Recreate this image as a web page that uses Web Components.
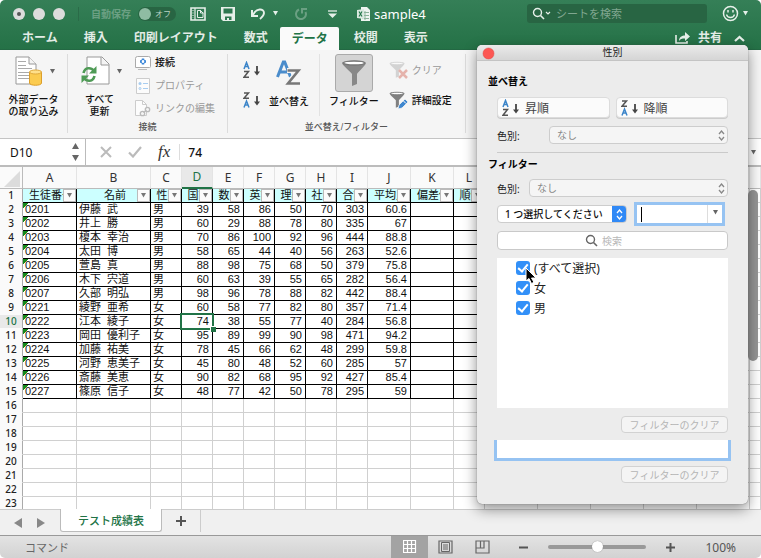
<!DOCTYPE html>
<html lang="ja">
<head>
<meta charset="utf-8">
<title>sample4</title>
<style>
html,body{height:100%}
body{margin:0;background:#fff;font-family:"Noto Sans","Noto Sans CJK JP",sans-serif;font-size:10px;color:#222;overflow:hidden}
</style>
</head>
<body>
<excel-window></excel-window>
<script>
const base = `*{box-sizing:border-box}
button,input,select{font:inherit;color:inherit;margin:0;padding:0;border:0;background:none;border-radius:0;outline:0}
button{display:flex;align-items:center;justify-content:center}`;

function define(name, css, html, init) {
  const t = document.createElement('template');
  t.innerHTML = `<style>${base}${css}</style>${typeof html === 'function' ? html() : html}`;
  customElements.define(name, class extends HTMLElement {
    constructor() {
      super();
      this.attachShadow({ mode: 'open' }).append(t.content.cloneNode(true));
    }
    connectedCallback() { if (init) init(this, this.shadowRoot); }
  });
}

const funnel = (a, b) => `<path d="M1 4C1 1 25 1 25 4C25 6 17 13 16 15V25L11 27V15C10 13 1 6 1 4Z" fill="${a}"/><ellipse cx="13" cy="4" rx="10.500" ry="2" fill="#fff" stroke="${b}" stroke-width="1.3"/>`;
const az = (t, b, ct, cb) => `<g fill="none" stroke-width="1.500"><g stroke="${ct}"><path d="${t}"/></g><g stroke="${cb}"><path d="${b}"/></g></g><path d="M14 5v7" stroke="#444" stroke-width="1.800"/><path d="M11 10.500h6L14 14.500z" fill="#444"/>`;
const icons = {
  close: [14, 14, `<circle cx="7" cy="7" r="6" fill="#dcdcdc"/>`],
  closeDot: [14, 14, `<circle cx="7" cy="7" r="6" fill="#dcdcdc"/><circle cx="7" cy="7" r="2" fill="#555"/>`],
  layout: [16, 14, `<path d="M1 1h14v12H1z" fill="none" stroke="#e6efe9" stroke-width="1.600"/><path d="M5 1v12" stroke="#e6efe9" stroke-width="1.200"/><path d="M3 3v8" stroke="#e6efe9" stroke-dasharray="1 1.500"/><path d="M7.500 3.500h3l2.500 2.500v4.500H7.500z" fill="#2c774f" stroke="#e6efe9"/><path d="M10.500 3v3h3" fill="none" stroke="#e6efe9"/>`],
  save: [14, 14, `<path d="M0 0h14v14H2L0 12z" fill="#e6efe9"/><path d="M2.500 1.500h9v5h-9zM4 9.500h6.500V13H8v-2H6v2H4z" fill="#2c774f"/>`],
  undo: [16, 13, `<path d="M3 8C6 1 14 1 14 6c0 2.500-2 4-4 6" fill="none" stroke="#e6efe9" stroke-width="1.900"/><path d="M2 3v6h6" fill="none" stroke="#e6efe9" stroke-width="2"/>`],
  redo: [14, 14, `<path d="M5 2.500A5 5 0 1 0 11.500 5" fill="none" stroke="#6ba083" stroke-width="2"/><path d="M8 6.500V2h5" fill="none" stroke="#6ba083" stroke-width="2"/>`],
  custom: [9, 8, `<path d="M0 1h9" stroke="#e6efe9" stroke-width="1.300"/><path d="M0 3.500h9L4.500 8z" fill="#e6efe9"/>`],
  book: [13, 14, `<path d="M4 0h6l3 3v11H4z" fill="#eef4f0"/><path d="M8 4v9M5 5.500h7M5 8.500h7M5 11.500h7" stroke="#8bb49a"/><path d="M0 3l7-1v10l-7-1z" fill="#dbe9e0"/><path d="M2 4.500l3 5M5 4.500l-3 5" stroke="#24764a" stroke-width="1.200"/>`],
  caret: [7, 5, `<path d="M1 0h5L3.500 4.500z" fill="currentColor"/>`],
  search: [13, 13, `<circle cx="5.500" cy="5.500" r="4" fill="none" stroke="currentColor" stroke-width="1.400"/><path d="M8.500 8.500L12 12" stroke="currentColor" stroke-width="1.600"/>`],
  chev: [6, 5, `<path d="M1 1l2 2 2-2" fill="none" stroke="#e6efe9" stroke-width="1.200"/>`],
  smile: [17, 17, `<circle cx="8.500" cy="8.500" r="7" fill="none" stroke="#e6efe9" stroke-width="1.500"/><path d="M6 5v2.500M11 5v2.500" stroke="#e6efe9" stroke-width="1.500"/><path d="M4.500 9.500c1 4 7 4 8 0" fill="none" stroke="#e6efe9" stroke-width="1.300"/>`],
  share: [16, 12, `<path d="M1 3v8h11V9" fill="none" stroke="#e6efe9" stroke-width="1.600"/><path d="M4 9c0-4 3-5.500 6-5.500V0l5 4.500L10 9V6.500C7 6.500 5 7 4 9z" fill="#e6efe9"/>`],
  up: [11, 7, `<path d="M1 6l4.500-4L10 6" fill="none" stroke="#e6efe9" stroke-width="2.200"/>`],
  data: [28, 30, `<path d="M1 1h13l7 7v20H1z" fill="#fff" stroke="#999"/><path d="M14 1v7h7" fill="#f4f4f4" stroke="#999"/><path d="M3 5.500h8M3 9.500h8M3 12.500h14M3 16.500h14M3 19.500h11M3 22.500h11" stroke="#aaa"/><path d="M14.500 16v11c0 3 12 3 12 0V16z" fill="#fbcb4f" stroke="#dc9f2b"/><ellipse cx="20.500" cy="16" rx="6" ry="2" fill="#ffe08a" stroke="#e0a93a"/>`],
  refresh: [29, 30, `<path d="M6 1h15l7 7v20H6z" fill="#fff" stroke="#999"/><path d="M20 1v8h8" fill="#f4f4f4" stroke="#999"/><g fill="none" stroke="#4f9b56" stroke-width="2.600"><path d="M2.500 17C4 11 10 11 13 15"/><path d="M13.500 20C12 26 6 26 3 22"/></g><path d="M15.500 10v7.500H8zM.500 27v-7.500H8z" fill="#4f9b56"/>`],
  conn: [16, 14, `<path d="M.500 2.500q0-2 2-2h11q2 0 2 2v8q0 1-1 1h-14z" fill="#fff" stroke="#aaa"/><path d="M3 13.500h9" stroke="#bbb"/><path d="M8 2.500v1.600M8 6.900v1.600M5 5.500h1.600M9.400 5.500H11" stroke="#3a86d8" stroke-width="2.400"/><circle cx="8" cy="5.500" r="2" fill="none" stroke="#3a86d8"/>`],
  prop: [16, 16, `<path d="M1.500.500h13v15h-13z" fill="#fcfcfc" stroke="#ccc"/><circle cx="5" cy="5.500" r="1.500" fill="#a8cdf0"/><circle cx="5" cy="10.500" r="1" fill="none" stroke="#a8cdf0"/><path d="M8 5.500h5M8 10.500h5" stroke="#a8cdf0"/>`],
  link: [17, 17, `<path d="M1.500.500h7l4 4v11h-11z" fill="#fcfcfc" stroke="#ccc"/><path d="M8.500.500v4h4" fill="none" stroke="#ccc"/><g fill="#f4f4f4" stroke="#bbb" stroke-width="1.300"><circle cx="8.500" cy="13.500" r="2.200"/><circle cx="13.500" cy="9.500" r="2.200"/></g><path d="M9.500 12.500l3-2.300" stroke="#bbb" stroke-width="1.300"/>`],
  asc: [18, 18, az('M1 8L3.500 1.500L6 8M2 5.500h3', 'M1 10.500h4.500L1 16.300h5', '#3c85c9', '#555')],
  desc: [18, 18, az('M1 2h4.500L1 7.300h5', 'M1 16.500L3.500 10L6 16.500M2 14h3', '#555', '#3c85c9')],
  sort: [26, 26, `<path d="M1.500 17L7.300 2h1.400l5.800 15M4 12h8" fill="none" stroke="#4a8ccb" stroke-width="3"/><path d="M11 10.500h12L11.500 23.500H24" fill="none" stroke="#f4f4f4" stroke-width="5"/><path d="M11.500 10.500h11L12 23.500h12" fill="none" stroke="#777" stroke-width="2.600"/>`],
  filter: [26, 28, funnel('#888', '#777')],
  clear: [20, 19, `<g transform="scale(.62)" opacity=".45">${funnel('#aaa', '#aaa')}</g><path d="M10 9l8 8M18 9l-8 8" stroke="#e5b3ac" stroke-width="2.500"/>`],
  adv: [20, 19, `<g transform="scale(.62)">${funnel('#808080', '#777')}</g><path d="M9 18l1-4 6-6 3 3-6 6z" fill="#3f87cf" stroke="#f4f4f4" stroke-width=".8"/><path d="M14 9.500l3 3" stroke="#fff"/>`],
  steps: [9, 18, `<path d="M1 6L4.500 0L8 6zM1 12l3.500 6L8 12z" fill="#666"/>`],
  x: [12, 12, `<path d="M1 1l10 10M11 1L1 11" stroke="#bbb" stroke-width="2"/>`],
  ok: [14, 12, `<path d="M1 6.500l4 4L13 1" fill="none" stroke="#bbb" stroke-width="2.200"/>`],
  corner: [16, 16, `<path d="M16 0v16H0z" fill="#dcdcdc"/>`],
  prev: [8, 10, `<path d="M8 0v10L0 5z" fill="#888"/>`],
  next: [8, 10, `<path d="M0 0v10l8-5z" fill="#888"/>`],
  plus: [10, 10, `<path d="M5 0v10M0 5h10" stroke="#555" stroke-width="2"/>`],
  plusS: [9, 9, `<path d="M4.500 0v9M0 4.500h9" stroke="#555" stroke-width="2"/>`],
  minus: [9, 9, `<path d="M0 4.500h9" stroke="#555" stroke-width="2"/>`],
  grid: [14, 14, `<path d="M.500.500h12v12H.500zM4.500.500v12M8.500.500v12M.500 4.500h12M.500 8.500h12" fill="none" stroke="#fff" stroke-width="1.200"/>`],
  page: [16, 14, `<path d="M1 1h13v12H1z" fill="none" stroke="#666" stroke-width="1.200"/><path d="M3.500 2.500h8v9h-8zM5 5h5M5 7h5M5 9h5" fill="none" stroke="#666"/>`],
  breaks: [15, 14, `<path d="M1 1h13v12H1zM1 8h8V1M5.500 1v7" fill="none" stroke="#666" stroke-width="1.200"/>`],
  red: [13, 13, `<circle cx="6.500" cy="6.500" r="5.500" fill="#fc5753" stroke="#df4744" stroke-width=".5"/>`],
  updown: [7, 11, `<path d="M1 4l2.500-3L6 4M1 7l2.500 3L6 7" fill="none" stroke="currentColor" stroke-width="1.300"/>`],
  cursor: [12, 18, `<path d="M1 1v13l3-2.500 2.500 5 2.500-1.200L6.500 11H11z" fill="#000" stroke="#fff"/>`]
};
customElements.define('xl-icon', class extends HTMLElement {
  connectedCallback() {
    if (this.shadowRoot) return;
    const [w, h, body] = icons[this.getAttribute('name')];
    this.attachShadow({ mode: 'open' }).innerHTML =
      `<style>:host{display:inline-flex;flex:none}svg{display:block}</style><svg width="${w}" height="${h}" viewBox="0 0 ${w} ${h}" aria-hidden="true">${body}</svg>`;
  }
});
const ic = n => `<xl-icon name="${n}"></xl-icon>`;

define('title-bar', `
:host{display:flex;align-items:center;height:27px;padding:0 12px;color:#e6efe9}
.lights{display:flex;gap:6px;padding-right:12px;border-right:1px solid #2a6b48}
.auto{display:flex;align-items:center;gap:7px;margin-left:12px;font-weight:bold;color:#6ba083}
.switch{width:38px;height:14px;border-radius:7px;background:#286543;justify-content:flex-start;gap:4px;font-size:8px;font-weight:normal;color:#b9d3c4}
.switch i{width:12px;height:12px;border-radius:6px;background:#8fbca3;margin-left:1px}
.tools{display:flex;align-items:center;margin-left:14px}
.tools button+button{margin-left:15px}.tools .c{margin-left:6px!important}
.name{display:flex;align-items:center;gap:4px;margin-left:20px;font-size:13px;color:#fff}
.find{display:flex;align-items:center;height:19px;width:180px;margin-left:auto;padding:0 5px;border-radius:3px;background:#286543;font-size:11px}
.find input{flex:1;min-width:0;margin-left:5px}.find input::placeholder{color:#80a790;opacity:1}
.face{margin-left:15px;gap:3px}`,
`<div class="lights">${ic('closeDot')}${ic('close')}${ic('close')}</div>
<div class="auto"><span>自動保存</span><button class="switch" role="switch" aria-checked="false" aria-label="自動保存"><i></i>オフ</button></div>
<div class="tools"><button aria-label="レイアウト">${ic('layout')}</button><button aria-label="保存">${ic('save')}</button><button aria-label="元に戻す">${ic('undo')}</button><button class="c" aria-label="履歴">${ic('caret')}</button><button aria-label="やり直し">${ic('redo')}</button><button aria-label="カスタマイズ" style="margin-left:20px">${ic('custom')}</button></div>
<div class="name">${ic('book')}<span>sample4</span></div>
<div class="find">${ic('search')}${ic('chev')}<input type="search" aria-label="シートを検索" placeholder="シートを検索"></div>
<button class="face" aria-label="フィードバック">${ic('smile')}${ic('caret')}</button>`);

define('ribbon-tabs', `
:host{display:flex;align-items:stretch;height:23px;padding-left:9px;color:#e3ece6;font-size:12px;font-weight:bold;border-bottom:1px solid #236843}
nav{display:flex}
button{padding:0 13px;line-height:18px}
[aria-selected=true]{background:#fafafa;color:#217346;margin:0 2px -1px -1px;padding:0 11px 0 12px;border-radius:2px 2px 0 0}
.right{display:flex;margin-left:auto;padding-right:16px}.right button{padding:0;gap:7px}.right button+button{margin-left:12px}`,
`<nav role="tablist">${['ホーム', '挿入', '印刷レイアウト', '数式', 'データ', '校閲', '表示'].map(t => `<button role="tab" aria-selected="${t === 'データ'}">${t}</button>`).join('')}</nav>
<div class="right"><button>${ic('share')}共有</button><button aria-label="リボンを折りたたむ">${ic('up')}</button></div>`);

define('ribbon-group', `
:host{display:flex;flex-direction:column;border-right:1px solid #dcdcdc;margin:4px 0 5px}
div{display:flex;flex:1}
span{display:block;text-align:center;font-size:9px;line-height:11px;color:#555;height:11px}`,
`<div><slot></slot></div><span></span>`,
(el, root) => { root.querySelector('span').textContent = el.getAttribute('label') || ''; });

define('data-ribbon', `
:host{display:flex;height:89px;background:#f5f5f5;border-bottom:1px solid #c4c4c4;color:#111;line-height:12px;font-family:"Liberation Sans","Noto Sans CJK JP",sans-serif;font-weight:500}
.big{flex-direction:column;justify-content:flex-start;gap:6px}
.ico{display:flex;align-items:center;height:34px;gap:6px;color:#666}
.list{display:flex;flex-direction:column;padding:0 12px 0 3px}
.list button{height:23px;justify-content:flex-start;gap:4px}
.list button:first-child{height:17px;margin-bottom:3px}
.slot{display:flex;justify-content:center;width:17px}
button:disabled{color:#999;font-weight:normal}
.sorts{display:flex;flex-direction:column;gap:12px;padding:7px 8px 0 15px}
.sep{border-right:1px solid #e2e2e2;height:62px;margin:0 9px 0 10px}
.on{display:flex;align-items:center;justify-content:center;width:38px;height:38px;border:1px solid #aaa;border-radius:3px;background:#d4d4d4}
.act{display:flex;flex-direction:column;gap:11px;padding:7px 13px 0 10px}.act button{justify-content:flex-start;gap:3px;height:19px}`,
`<ribbon-group><button class="big" style="width:67px"><span class="ico" style="padding-left:4px">${ic('data')}${ic('caret')}</span><span>外部データ<br>の取り込み</span></button></ribbon-group>
<ribbon-group label="接続"><button class="big" style="width:63px"><span class="ico" style="padding-left:4px">${ic('refresh')}${ic('caret')}</span><span>すべて<br>更新</span></button>
<span class="list"><button><span class="slot">${ic('conn')}</span>接続</button><button disabled><span class="slot">${ic('prop')}</span>プロパティ</button><button disabled><span class="slot">${ic('link')}</span>リンクの編集</button></span></ribbon-group>
<ribbon-group label="並べ替え/フィルター"><span class="sorts"><button aria-label="昇順">${ic('asc')}</button><button aria-label="降順">${ic('desc')}</button></span>
<button class="big" style="gap:4px"><span class="ico" style="height:38px">${ic('sort')}</span>並べ替え</button><span class="sep"></span>
<button class="big" style="gap:4px"><span class="on">${ic('filter')}</span>フィルター</button>
<span class="act"><button disabled>${ic('clear')}クリア</button><button>${ic('adv')}詳細設定</button></span></ribbon-group>`);

define('formula-bar', `
:host{display:flex;align-items:center;height:28px;background:#fff;border-bottom:2px solid #bcbcbc;font-size:12px;color:#111}
.ref{display:flex;align-items:center;height:100%;width:86px;padding:0 5px 0 10px;border-right:1px solid #bbb}
.ref input{width:50px;flex:1}.ref button{width:9px}
.btns{display:flex;gap:16px;align-items:center;padding:0 9px 0 14px;border-right:1px solid #ddd}
.fx{font:italic 17px/16px "Liberation Serif",serif;color:#333}
.val{flex:1;min-width:0;margin-left:8px;font-weight:500}.drop{padding-right:4px;color:#666}`,
`<div class="ref"><input aria-label="名前ボックス" value="D10"><button aria-label="名前一覧">${ic('steps')}</button></div>
<div class="btns"><button aria-label="キャンセル">${ic('x')}</button><button aria-label="入力">${ic('ok')}</button><button class="fx">fx</button></div>
<input class="val" aria-label="数式" value="74"><button class="drop" aria-label="展開">${ic('caret')}</button>`);

// Column letters and widths; the last column takes the remaining width.
const cols = [['A', 54], ['B', 74], ['C', 31], ['D', 31], ['E', 31], ['F', 31], ['G', 31], ['H', 31], ['I', 31], ['J', 43], ['K', 43], ['L', 31], ['', 53], ['', 53], ['', 53], ['', 53], ['', 53], ['', 0]];
const heads = ['生徒番号', '名前', '性別', '国語', '数学', '英語', '理科', '社会', '合計', '平均点', '偏差値', '順位'];
const people = `0201,伊藤  武,男,39,58,86,50,70,303,60.6
0202,井上  勝,男,60,29,88,78,80,335,67
0203,榎本  幸治,男,70,86,100,92,96,444,88.8
0204,太田  博,男,58,65,44,40,56,263,52.6
0205,萱島  真,男,88,98,75,68,50,379,75.8
0206,木下  宍道,男,60,63,39,55,65,282,56.4
0207,久部  明弘,男,98,96,78,88,82,442,88.4
0221,綾野  亜希,女,60,58,77,82,80,357,71.4
0222,江本  綾子,女,74,38,55,77,40,284,56.8
0223,岡田  優利子,女,95,89,99,90,98,471,94.2
0224,加藤  祐美,女,78,45,66,62,48,299,59.8
0225,河野  恵美子,女,45,80,48,52,60,285,57
0226,斎藤  美恵,女,90,82,68,95,92,427,85.4
0227,篠原  信子,女,48,77,42,50,78,295,59`.split('\n').map(r => r.split(','));

define('work-sheet', `
:host{display:block;position:relative;flex:1;min-height:0;overflow:hidden;background:#fff}
table{width:100%;table-layout:fixed;border-collapse:separate;border-spacing:0;font:11px/13px "Liberation Sans","Noto Sans CJK JP",sans-serif;color:#111}
th,td{height:14px;padding:0;border:0 solid #d0d0d0;border-width:0 1px 1px 0;white-space:pre;overflow:hidden;font-weight:normal}
thead th{height:22px;background:#fafafa;border-color:#e4e4e4;border-bottom-color:#bbb;font:12px/21px "Noto Sans",sans-serif;color:#333}
thead th:first-child{border-right-color:#bbb;line-height:0;padding:2px 2px 0 4px}
thead .sel{background:#e9e9e9;color:#217346;border-bottom:2px solid #217346;line-height:20px}
tbody th{background:#fafafa;border-color:#fafafa;border-right-color:#aaa;font:500 10px/13px "Noto Sans",sans-serif;color:#222}
tbody th.sel{background:#e9e9e9;color:#217346}
.d{border-color:#000}.n{text-align:right;padding-right:3px}.t{padding-left:2px}
.id{background:linear-gradient(135deg,#148a1b 4px,transparent 4px)}
.h{background:#cff;text-align:center;position:relative}
.h span{position:absolute;inset:0;display:flex;justify-content:center;padding-left:3px}
.h button{position:absolute;right:0;top:0;width:13px;height:13px;background:#fbfbfb;border:1px solid #bbb;color:#777}
.cur{position:relative;overflow:visible}
.cur::before{content:"";position:absolute;inset:-2px;border:2px solid #217346}
.cur::after{content:"";position:absolute;right:-4px;bottom:-4px;width:5px;height:5px;background:#217346;border:solid #fff;border-width:1px 0 0 1px}
.bar{position:absolute;right:3px;top:23px;width:10px;height:171px;border-radius:5px;background:#969696}`,
() => {
  const colgroup = '<col style="width:23px">' + cols.map(([, w]) => `<col${w ? ` style="width:${w}px"` : ''}>`).join('');
  const top = cols.map(([c]) => `<th scope="col"${c === 'D' ? ' class="sel"' : ''}>${c}</th>`).join('');
  let body = '';
  for (let r = 1; r <= 23; r++) {
    body += `<tr><th scope="row"${r === 10 ? ' class="sel"' : ''}>${r}</th>`;
    cols.forEach((_, c) => {
      if (r > 15 || c > 11) body += '<td></td>';
      else if (r === 1) body += `<td class="d h"><span>${heads[c]}</span><button aria-label="${heads[c]}フィルター">${ic('caret')}</button></td>`;
      else body += `<td class="d ${c > 2 ? 'n' : 't'}${c === 0 ? ' id' : ''}${r === 10 && c === 3 ? ' cur' : ''}">${people[r - 2][c] || ''}</td>`;
    });
    body += '</tr>';
  }
  return `<table><colgroup>${colgroup}</colgroup><thead><tr><th>${ic('corner')}</th>${top}</tr></thead><tbody>${body}</tbody></table><div class="bar"></div>`;
});

define('sheet-tabs', `
:host{display:flex;height:26px;background:#f0f0f0;border-top:1px solid #ccc}
.nav{display:flex;gap:15px;padding:0 15px 0 14px;align-items:center}
.tab{height:23px;margin-top:-1px;padding:0 17px;background:#fff;color:#217346;font-size:11px;font-weight:500;border:1px solid #bbb;border-top:0;border-radius:0 0 3px 3px}
.add{width:39px;border-right:1px solid #ccc;height:22px}`,
`<div class="nav"><button aria-label="前のシート">${ic('prev')}</button><button aria-label="次のシート">${ic('next')}</button></div><button class="tab">テスト成績表</button><button class="add" aria-label="シートを追加">${ic('plus')}</button>`);

define('status-bar', `
:host{display:flex;align-items:center;height:23px;padding:0 25px;border-top:1px solid #999;background:linear-gradient(#e3e3e3,#d2d2d2);color:#666;font-size:11px}
.views{display:flex;margin-left:auto;align-self:stretch}.views button{width:36px}.views .on{background:#a3a3a3;width:37px}
.zoom{display:flex;align-items:center;gap:20px;margin-left:19px}
input{appearance:none;width:98px;height:14px}
input::-webkit-slider-runnable-track{height:4px;border-radius:2px;background:#999}
input::-webkit-slider-thumb{appearance:none;width:11px;height:11px;margin-top:-4px;border-radius:6px;background:#fff;box-shadow:0 0 1px #777}
output{margin-left:30px;font-size:12px;color:#555}`,
`<span>コマンド</span><div class="views"><button class="on" aria-label="標準">${ic('grid')}</button><button aria-label="ページレイアウト">${ic('page')}</button><button aria-label="改ページ">${ic('breaks')}</button></div>
<div class="zoom"><button aria-label="縮小">${ic('minus')}</button><input type="range" aria-label="ズーム" min="0" max="200" value="100"><button aria-label="拡大">${ic('plusS')}</button></div><output>100%</output>`);

define('filter-panel', `
:host{display:block;position:absolute;right:13px;top:45px;width:271px;padding-bottom:21px;background:#ececec;border-radius:5px;box-shadow:0 0 1px #555,0 5px 14px rgba(0,0,0,.45);color:#222}
header{position:relative;height:16px;border-bottom:1px solid #c4c4c4;background:linear-gradient(#eaeaea,#d5d5d5);border-radius:5px 5px 0 0;text-align:center;font-size:10px;line-height:15px}
header button{position:absolute;left:5px;top:2px}
h2{margin:0;padding-left:11px;font-size:10px;line-height:14px;color:#000}
.body{padding:0 20px}
.row{display:flex;align-items:center}
.sort{gap:6px}.sort button{flex:1;height:21px;justify-content:flex-start;gap:5px;padding-left:4px;font-size:12px;color:#444;border-color:#dcdcdc}
.b{background:#fbfbfb;border:1px solid #d2d2d2;border-radius:4px;box-shadow:0 1px 0 #ccc}
.pick{position:relative;display:flex;flex:1;height:18px}
.pick select{appearance:none;width:100%;padding-left:7px;background:#f5f5f5;border:1px solid #cdcdcd;border-radius:4px;color:#888;opacity:1}
.pick xl-icon{position:absolute;right:3px;top:4px;color:#888;pointer-events:none}
.pick.act{flex:none;width:130px}.pick.act select{background:linear-gradient(90deg,#fff 114px,#3089f6 114px);color:#111;font-weight:500}
.pick.act xl-icon{color:#fff;right:4px}
hr{border:0;border-top:1px solid #cacaca;margin:8px 0 4px}
.combo{display:flex;margin-left:10px;width:85px;height:18px;background:#fff;box-shadow:0 0 0 3px #96c3f2;align-items:center}
.combo input{flex:1;min-width:0;padding-left:5px;height:15px}
.combo .bar{width:1px;height:15px;background:#000;margin-left:4px}
.combo button{width:15px;height:100%;border-left:1px solid #ddd;color:#666;align-items:flex-start;padding-top:5px}
.find{height:19px;margin-top:8px;padding-left:87px;border:1px solid #c9c9c9;border-radius:4px;background:#fff;color:#666;gap:4px}
.find input{flex:1;min-width:0}.find input::placeholder{color:#b8b8b8;opacity:1}
.list{position:relative;height:150px;margin-top:8px;background:#fff;font-size:12px}
label.item{display:flex;align-items:center;gap:4px;height:20px;padding-left:19px}
.item input{appearance:none;width:14px;height:14px;border-radius:3px;background:#3290f8;display:grid;place-items:center}
.item input::before{content:"";width:4px;height:8px;margin-top:-2px;border:solid #fff;border-width:0 2px 2px 0;transform:rotate(40deg)}
.list>xl-icon{position:absolute;left:28px;top:9px}
.clear{margin-left:auto;width:107px;height:17px;color:#b4b4b4;background:#f4f4f4;box-shadow:none}
.note{display:block;width:100%;height:18px;background:#fff;box-shadow:-3px 0 0 #96c3f2,3px 0 0 #96c3f2,-3px 3px 0 #96c3f2,3px 3px 0 #96c3f2;margin:7px 0 8px}`,
`<header><button aria-label="閉じる">${ic('red')}</button>性別</header>
<h2 style="margin:13px 0 9px">並べ替え</h2>
<div class="body"><div class="row sort"><button class="b">${ic('asc')}昇順</button><button class="b">${ic('desc')}降順</button></div>
<div class="row" style="margin-top:8px"><label for="c1" style="width:52px">色別:</label><span class="pick"><select id="c1" disabled><option>なし</option></select>${ic('updown')}</span></div><hr></div>
<h2>フィルター</h2>
<div class="body"><div class="row" style="margin-top:8px"><label for="c2" style="width:32px">色別:</label><span class="pick"><select id="c2" disabled><option>なし</option></select>${ic('updown')}</span></div>
<div class="row" style="margin-top:8px"><span class="pick act"><select aria-label="条件"><option>1 つ選択してください</option></select>${ic('updown')}</span><span class="combo"><i class="bar"></i><input aria-label="値"><button aria-label="値の一覧">${ic('caret')}</button></span></div>
<div class="row find">${ic('search')}<input type="search" aria-label="検索" placeholder="検索"></div>
<div class="list"><label class="item"><input type="checkbox" checked>(すべて選択)</label><label class="item"><input type="checkbox" checked>女</label><label class="item"><input type="checkbox" checked>男</label>${ic('cursor')}</div>
<button class="b clear" style="margin-top:8px" disabled>フィルターのクリア</button>
<input class="note" aria-label="条件の値">
<button class="b clear" disabled>フィルターのクリア</button></div>`);

define('excel-window', `
:host{display:flex;flex-direction:column;position:relative;height:100vh;overflow:hidden;border-radius:5px}
.top{background:linear-gradient(#357f57,#247146)}`,
`<div class="top"><title-bar></title-bar><ribbon-tabs></ribbon-tabs></div><data-ribbon></data-ribbon><formula-bar></formula-bar><work-sheet></work-sheet><sheet-tabs></sheet-tabs><status-bar></status-bar><filter-panel></filter-panel>`);
</script>
</body>
</html>
